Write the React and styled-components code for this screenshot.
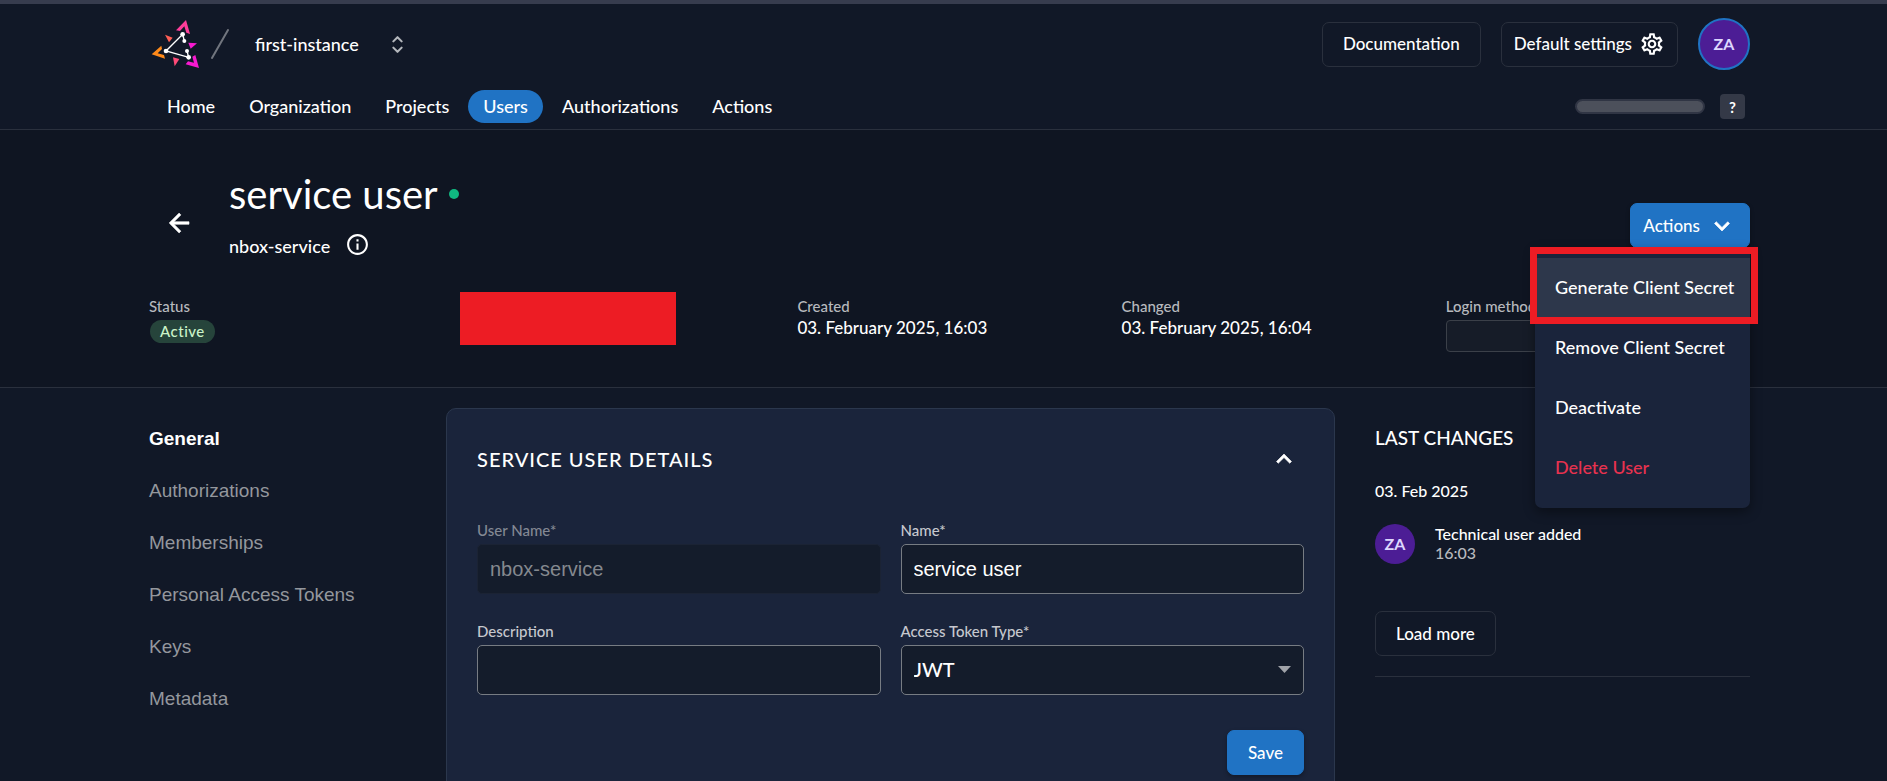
import React from "react";
import styled, { createGlobalStyle, css } from "styled-components";
import { MdInfoOutline, MdOutlineSettings } from "react-icons/md";

const color = {
  page: "#111827",
  hero: "#0f1522",
  card: "#1a243b",
  line: "#2a303d",
  primary: "#2073c4",
  text: "#ffffff",
  muted: "#b7b9be",
  mark: "#ed1c24",
};

const GlobalStyle = createGlobalStyle`
  *, *::before, *::after { box-sizing: border-box; }
  body {
    margin: 0;
    background: ${color.page};
    color: ${color.text};
    font-family: Lato, "Liberation Sans", sans-serif;
    font-size: 17px;
    font-weight: 500;
  }
  h1, h2, h3, p, ul, dl, dd { margin: 0; padding: 0; font-weight: 500; }
  ul { list-style: none; }
  button, input, select { font: inherit; color: inherit; }
  button { cursor: pointer; }
  a { color: inherit; text-decoration: none; }
  svg { display: block; flex: none; }
`;

const gutters = css`
  padding-left: 149px;
  padding-right: 137px;
`;

const Shell = styled.div`
  height: 100vh;
  overflow: hidden;
  border-top: 4px solid #373c4e;
`;

const Header = styled.header`
  ${gutters}
  padding-top: 14px;
  padding-bottom: 6px;
  border-bottom: 1px solid ${color.line};
`;

const Bar = styled.div`
  display: flex;
  align-items: center;
  justify-content: space-between;
`;

const Brand = styled.div`
  display: flex;
  align-items: center;
`;

const Slash = styled.svg`
  margin-left: 10px;
`;

const InstanceButton = styled.button`
  display: flex;
  align-items: center;
  gap: 26px;
  margin-left: 26px;
  padding: 0;
  border: 0;
  background: none;
  font-size: 18px;
  line-height: 22px;
`;

const Tools = styled.div`
  display: flex;
  align-items: center;
  gap: 20px;
`;

const Button = styled.button`
  display: inline-flex;
  align-items: center;
  justify-content: center;
  gap: 7px;
  height: 45px;
  padding: 0 ${(p) => p.$pad || 20}px;
  border: 1px solid ${(p) => (p.$primary ? color.primary : color.line)};
  border-radius: 7px;
  background: ${(p) => (p.$primary ? color.primary : "transparent")};
  box-shadow: ${(p) => (p.$primary ? "0 2px 4px rgba(0, 0, 0, 0.3)" : "none")};
  line-height: 22px;
  white-space: nowrap;
`;

const Avatar = styled.span`
  display: inline-flex;
  align-items: center;
  justify-content: center;
  flex: none;
  width: ${(p) => p.$size}px;
  height: ${(p) => p.$size}px;
  padding: 0;
  border: ${(p) => (p.$ring ? `2px solid ${color.primary}` : "0")};
  border-radius: 50%;
  background: #4c1d95;
  color: #ddd6fe;
  font-size: 16px;
  font-weight: 700;
  line-height: 20px;
`;

const NavRow = styled(Bar)`
  margin-top: 20px;
`;

const Nav = styled.nav`
  display: flex;
  gap: 4px;
  margin-left: 3px;
  font-size: 18px;
`;

const NavLink = styled.a`
  padding: 0 15px;
  border-radius: 17px;
  background: ${(p) => (p.$active ? color.primary : "transparent")};
  line-height: 33px;
`;

const NavTools = styled.div`
  display: flex;
  align-items: center;
  gap: 15px;
  margin-right: 5px;
`;

const Placeholder = styled.div`
  width: 130px;
  height: 15px;
  border: 2px solid #303544;
  border-radius: 8px;
  background: #4c505b;
`;

const HelpButton = styled.button`
  width: 25px;
  height: 25px;
  padding: 0;
  border: 0;
  border-radius: 4px;
  background: #343947;
  font-size: 15px;
  font-weight: 700;
  line-height: 20px;
`;

const Hero = styled.section`
  ${gutters}
  padding-top: 40px;
  padding-bottom: 35px;
  border-bottom: 1px solid ${color.line};
  background: ${color.hero};
`;

const HeroTop = styled.div`
  display: flex;
  align-items: flex-start;
`;

const BackButton = styled.button`
  display: flex;
  align-items: center;
  justify-content: center;
  width: 40px;
  height: 40px;
  margin: 33px 30px 0 10px;
  padding: 0;
  border: 0;
  border-radius: 50%;
  background: none;
`;

const Heading = styled.div`
  flex: 1;
`;

const Title = styled.h1`
  display: flex;
  align-items: center;
  gap: 11px;
  font-size: 40px;
  font-weight: 400;
  line-height: 48px;
`;

const OnlineDot = styled.span`
  width: 10px;
  height: 10px;
  border-radius: 50%;
  background: #10b981;
`;

const Subtitle = styled.div`
  display: flex;
  gap: 15px;
  height: 27px;
  margin-top: 14px;
  font-size: 18px;

  p {
    align-self: flex-end;
    line-height: 26px;
  }
`;

const ActionsMenu = styled.div`
  position: relative;
  margin-top: 33px;
`;

const Menu = styled.ul`
  position: absolute;
  z-index: 2;
  top: 45px;
  right: 0;
  width: 215px;
  padding: 10px 0;
  border-radius: 0 0 7px 7px;
  background: ${color.card};
  box-shadow: 0 4px 12px rgba(0, 0, 0, 0.4);
`;

const MenuEntry = styled.li`
  position: relative;
`;

const MenuButton = styled.button`
  display: block;
  width: 100%;
  height: 60px;
  padding: 0 20px 2px;
  border: 0;
  background: ${(p) => (p.$active ? "#2d374b" : "transparent")};
  color: ${(p) => (p.$danger ? "#e8324f" : color.text)};
  font-size: 18px;
  text-align: left;
  white-space: nowrap;
`;

const Marker = styled.span`
  position: absolute;
  inset: -11px -8px -6px -5px;
  border: 7px solid ${color.mark};
  pointer-events: none;
`;

const Facts = styled.dl`
  display: grid;
  grid-template-columns: repeat(5, 1fr);
  gap: 20px;
  margin-top: 37px;
`;

const Fact = styled.div`
  position: relative;
  height: 56px;

  dt {
    color: ${color.muted};
    font-size: 15px;
    line-height: 20px;
  }

  dd {
    line-height: 24px;
  }
`;

const Badge = styled.span`
  display: block;
  width: fit-content;
  margin: 4px 0 0 1px;
  padding: 0 10px;
  border-radius: 12px;
  background: #26443b;
  color: #cbf4c9;
  font-size: 15px;
  letter-spacing: 0.5px;
  line-height: 23px;
`;

const Redaction = styled.div`
  position: absolute;
  top: -4px;
  left: -13px;
  width: 216px;
  height: 53px;
  background: ${color.mark};
`;

const LoginBox = styled.div`
  height: 32px;
  margin-top: 4px;
  border: 1px solid #3b4049;
  border-radius: 4px;
  background: #161c28;
`;

const Main = styled.main`
  ${gutters}
  display: grid;
  grid-template-columns: 297px 1fr 375px;
  padding-top: 20px;
`;

const SideNav = styled.nav`
  display: flex;
  flex-direction: column;
  padding-top: 5px;
  font-family: "Liberation Sans", Arial, sans-serif;
  font-size: 19px;
`;

const SideLink = styled.a`
  color: ${(p) => (p.$active ? color.text : "#94979d")};
  font-weight: ${(p) => (p.$active ? 700 : 400)};
  line-height: 52px;
`;

const Card = styled.section`
  margin-right: 40px;
  padding: 38px 30px 30px;
  border: 1px solid #2b374d;
  border-radius: 10px;
  background: ${color.card};
`;

const CardHeader = styled(Bar)`
  height: 24px;
`;

const CardTitle = styled.h2`
  font-size: 20px;
  letter-spacing: 1px;
  line-height: 24px;
  text-transform: uppercase;
`;

const IconButton = styled.button`
  margin-right: 5px;
  padding: 0;
  border: 0;
  background: none;
`;

const Form = styled.form`
  display: grid;
  grid-template-columns: 1fr 1fr;
  gap: 27px 20px;
  margin-top: 49px;
`;

const Field = styled.div`
  label {
    display: block;
    margin-bottom: 4px;
    color: ${(p) => (p.$disabled ? "#838893" : "#c6c8ce")};
    font-size: 15px;
    line-height: 20px;
  }
`;

const control = css`
  display: block;
  width: 100%;
  height: 50px;
  padding: 0 12px;
  border: 1px solid #777c83;
  border-radius: 5px;
  outline: 0;
  background: #141c2b;
  font-size: 20px;
`;

const TextInput = styled.input`
  ${control}
  font-family: "Liberation Sans", Arial, sans-serif;

  &:disabled {
    border-color: #1b2334;
    color: #85898f;
  }
`;

const SelectBox = styled.div`
  position: relative;

  select {
    ${control}
    padding-bottom: 2px;
    appearance: none;
  }

  svg {
    position: absolute;
    top: 21px;
    right: 13px;
    pointer-events: none;
  }
`;

const FormFooter = styled.div`
  display: flex;
  grid-column: 1 / -1;
  justify-content: flex-end;
  margin-top: 8px;
`;

const Changes = styled.aside`
  padding-top: 19px;
`;

const ChangesTitle = styled.h2`
  font-size: 19px;
  line-height: 22px;
`;

const ChangesDate = styled.h3`
  margin-top: 32px;
  font-size: 16px;
  line-height: 20px;
`;

const ChangeEntry = styled.div`
  display: flex;
  gap: 20px;
  margin: 23px 0 47px;
  font-size: 16px;
  line-height: 19px;

  time {
    color: ${color.muted};
  }
`;

const Divider = styled.hr`
  height: 1px;
  margin: 20px 0 0;
  border: 0;
  background: ${color.line};
`;

function Logo() {
  return (
    <svg width="52" height="52" viewBox="57 54 156 156" aria-label="Logo">
      <path fill="#ff3d9a" d="M168 60 180 102 169 98 163 79 150 93 138 91Z" />
      <path fill="#ff8a1a" d="M65 163 94 137 96 147 83 160 102 165 105 176Z" />
      <path fill="#f81ad0" d="M207 204 167 193 174 184 192 188 187 170 196 165Z" />
      <path fill="#ff5e55" d="M105 104 128 113 117 127Z" />
      <path fill="#f81ad0" d="M175 128 201 130 182 146Z" />
      <path fill="#ff4a77" d="M129 172 148 177 134 199Z" />
      <path
        fill="none"
        stroke="#fff"
        strokeWidth="4"
        d="M163 123 158 103 108 153 176 172 171 153"
      />
      <g fill="#fff">
        <circle cx="158" cy="103" r="7" />
        <circle cx="163" cy="123" r="6" />
        <circle cx="171" cy="153" r="6" />
        <circle cx="176" cy="172" r="7" />
        <circle cx="108" cy="153" r="7" />
      </g>
    </svg>
  );
}

function Chevron({ up }) {
  return (
    <svg
      width="30"
      height="30"
      viewBox="0 0 24 24"
      fill="currentColor"
      stroke="currentColor"
      strokeWidth="0.5"
    >
      <path
        d={
          up
            ? "M7.41 15.41 12 10.83 16.59 15.41 18 14 12 8 6 14Z"
            : "M7.41 8.58 12 13.17 16.59 8.58 18 10 12 16 6 10Z"
        }
      />
    </svg>
  );
}

const navItems = ["Home", "Organization", "Projects", "Users", "Authorizations", "Actions"];

const sideItems = [
  "General",
  "Authorizations",
  "Memberships",
  "Personal Access Tokens",
  "Keys",
  "Metadata",
];

export default function App() {
  return (
    <Shell>
      <GlobalStyle />
      <Header>
        <Bar>
          <Brand>
            <Logo />
            <Slash width="18" height="30" viewBox="0 0 18 30">
              <path d="M1 29 17 1" stroke="#71757e" strokeWidth="2" strokeLinecap="round" />
            </Slash>
            <InstanceButton>
              first-instance
              <svg
                width="25"
                height="25"
                viewBox="0 0 24 24"
                fill="none"
                stroke="#b4b7bc"
                strokeWidth="2"
                strokeLinecap="round"
                strokeLinejoin="round"
              >
                <path d="M8 9l4-4 4 4m0 6l-4 4-4-4" />
              </svg>
            </InstanceButton>
          </Brand>
          <Tools>
            <Button>Documentation</Button>
            <Button $pad={12}>
              Default settings
              <MdOutlineSettings size={26} />
            </Button>
            <Avatar as="button" $size={52} $ring>
              ZA
            </Avatar>
          </Tools>
        </Bar>
        <NavRow>
          <Nav>
            {navItems.map((name) => (
              <NavLink key={name} href="#" $active={name === "Users"}>
                {name}
              </NavLink>
            ))}
          </Nav>
          <NavTools>
            <Placeholder />
            <HelpButton>?</HelpButton>
          </NavTools>
        </NavRow>
      </Header>

      <Hero>
        <HeroTop>
          <BackButton aria-label="Back">
            <svg
              width="30"
              height="30"
              viewBox="0 0 24 24"
              fill="currentColor"
              stroke="currentColor"
              strokeWidth="0.5"
            >
              <path d="M20 11V13H8L13.5 18.5 12.08 19.92 4.16 12 12.08 4.08 13.5 5.5 8 11Z" />
            </svg>
          </BackButton>
          <Heading>
            <Title>
              service user
              <OnlineDot />
            </Title>
            <Subtitle>
              <p>nbox-service</p>
              <MdInfoOutline size={25} />
            </Subtitle>
          </Heading>
          <ActionsMenu>
            <Button $primary $pad={12}>
              Actions
              <Chevron />
            </Button>
            <Menu>
              <MenuEntry>
                <MenuButton $active>Generate Client Secret</MenuButton>
                <Marker />
              </MenuEntry>
              <MenuEntry>
                <MenuButton>Remove Client Secret</MenuButton>
              </MenuEntry>
              <MenuEntry>
                <MenuButton>Deactivate</MenuButton>
              </MenuEntry>
              <MenuEntry>
                <MenuButton $danger>Delete User</MenuButton>
              </MenuEntry>
            </Menu>
          </ActionsMenu>
        </HeroTop>
        <Facts>
          <Fact>
            <dt>Status</dt>
            <dd>
              <Badge>Active</Badge>
            </dd>
          </Fact>
          <Fact>
            <Redaction />
          </Fact>
          <Fact>
            <dt>Created</dt>
            <dd>03. February 2025, 16:03</dd>
          </Fact>
          <Fact>
            <dt>Changed</dt>
            <dd>03. February 2025, 16:04</dd>
          </Fact>
          <Fact>
            <dt>Login methods</dt>
            <dd>
              <LoginBox />
            </dd>
          </Fact>
        </Facts>
      </Hero>

      <Main>
        <SideNav>
          {sideItems.map((name) => (
            <SideLink key={name} href="#" $active={name === "General"}>
              {name}
            </SideLink>
          ))}
        </SideNav>
        <Card>
          <CardHeader>
            <CardTitle>Service User Details</CardTitle>
            <IconButton aria-label="Collapse">
              <Chevron up />
            </IconButton>
          </CardHeader>
          <Form onSubmit={(e) => e.preventDefault()}>
            <Field $disabled>
              <label htmlFor="username">User Name*</label>
              <TextInput id="username" defaultValue="nbox-service" disabled />
            </Field>
            <Field>
              <label htmlFor="name">Name*</label>
              <TextInput id="name" defaultValue="service user" />
            </Field>
            <Field>
              <label htmlFor="description">Description</label>
              <TextInput id="description" />
            </Field>
            <Field>
              <label htmlFor="token-type">Access Token Type*</label>
              <SelectBox>
                <select id="token-type" defaultValue="JWT">
                  <option>JWT</option>
                </select>
                <svg width="13" height="7" viewBox="0 0 13 7">
                  <path d="M0 0H13L6.5 7Z" fill="#a0a3a9" />
                </svg>
              </SelectBox>
            </Field>
            <FormFooter>
              <Button type="submit" $primary>
                Save
              </Button>
            </FormFooter>
          </Form>
        </Card>
        <Changes>
          <ChangesTitle>LAST CHANGES</ChangesTitle>
          <ChangesDate>03. Feb 2025</ChangesDate>
          <ChangeEntry>
            <Avatar $size={40}>ZA</Avatar>
            <div>
              <p>Technical user added</p>
              <time>16:03</time>
            </div>
          </ChangeEntry>
          <Button>Load more</Button>
          <Divider />
        </Changes>
      </Main>
    </Shell>
  );
}
